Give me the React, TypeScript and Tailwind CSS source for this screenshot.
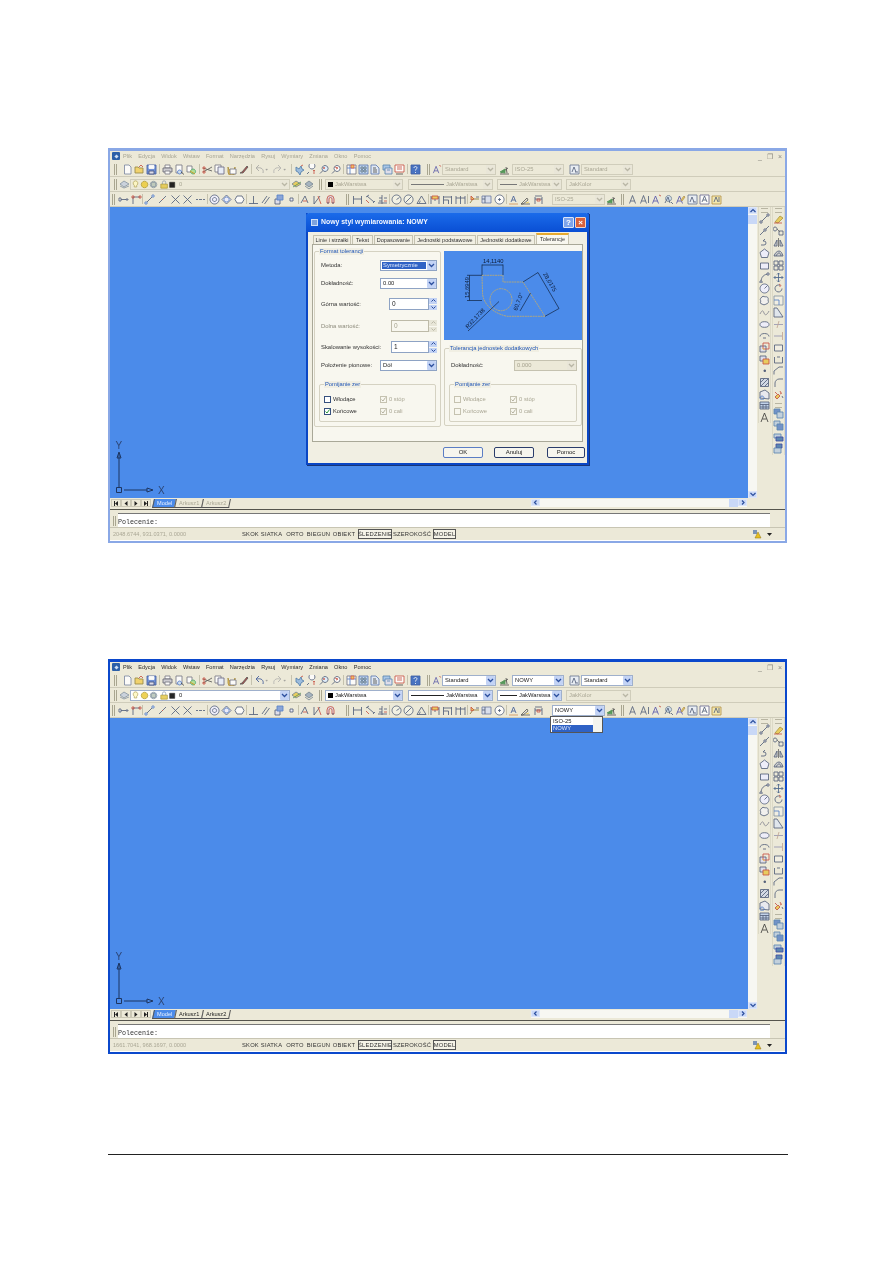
import React from 'react'

// small drawing helpers
const N = '#3b4a6b'
const R = '#c0392b'
const Y = '#e8c84a'
const B = '#3f6fc4'
type P = [string, string, string?]

const ICONS: Record<string, P[]> = {
  // standard toolbar
  new: [['M2.500 1h4.500l2 2v7h-6.500z', '#6b7a99', '#fff']],
  open: [['M1 3h3l1 1h4v5H1z', '#8a7a30', '#f2cf5b'], ['M5 3l2-2 2 2', R]],
  save: [['M1 1h9v9H1z', '#2b4a9a', '#5b82d6'], ['M3 1.500h5v3H3z', '#fff', '#fff'], ['M3 7h5v3H3z', '#2b3a6a', '#dde']],
  print: [['M3 1h5v3H3z', '#667', '#fff'], ['M1 4h9v4H1z', '#556', '#c8c8d0'], ['M3 7h5v3H3z', '#667', '#fff']],
  preview: [['M2 1h6v8H2z', '#667', '#fff'], ['M5.500 6a2 2 0 1 0 .1 0z', '#36c', '#cde'], ['M7 8l3 2.500', '#333']],
  publish: [['M1 2h5v6H1z', '#667', '#fff'], ['M7 5a2.500 2.500 0 1 0 .1 0z', '#396', '#ad8'], ['M4 7l5 3', '#c80']],
  cut: [['M1 4l9 3M1 8l9-5', '#444'], ['M1 3h2v2H1zM1 7h2v2H1z', R]],
  copy: [['M1 1h6v7H1z', '#667', '#fff'], ['M4 3h6v7H4z', '#557', '#e8eefc']],
  paste: [['M2 3a3.500 3.500 0 1 0 7 0v5a3 3 0 0 1-7 0z', '#a08020', '#e5b848'], ['M4 5h6v5H4z', '#667', '#fff']],
  brush: [['M2 9l2-1 5-6 1 1-5 6z', '#444', '#a33']],
  undo: [['M9 9c1-4-2-6-6-5M5 1L2 4l3 3', '#999']],
  undoOn: [['M9 9c1-4-2-6-6-5M5 1L2 4l3 3', '#1d3f8c']],
  redo: [['M2 9c-1-4 2-6 6-5M6 1l3 3-3 3', '#a8a8a8']],
  caret: [['M1.500 5h3l-1.500 2z', '#888', '#888']],
  pan: [['M2 3l3 2 2-3 1 3 2 1-3 2-1 3-2-3-2-1z', '#3a6ea5', '#8fb5df'], ['M7 2l2-1', R]],
  zoomrt: [['M6 5a3 3 0 1 0-.1 0z', N, '#fff'], ['M3 8L1 10', N], ['M8 7v3M7 7l1-1 1 1', R]],
  zoom: [['M7 1.500a3 3 0 1 0 .1 0z', N, '#def'], ['M5 6.500l-3 3', N], ['M6 3v2M5 4h2', R]],
  zoomprev: [['M7 1.500a3 3 0 1 0 .1 0z', N, '#fff'], ['M5 6.500l-3 3', N], ['M5 3l3 1-2 1', R]],
  props: [['M1 1h9v9H1z', '#667', '#fff'], ['M1 4h9M4 1v9', B], ['M5 1h3v3H5z', '#d43', Y]],
  dc: [['M1 1h9v9H1z', '#46a', '#bcd3f3'], ['M3 3h2v2H3zM6 3h2v2H6zM3 6h2v2H3zM6 6h2v2H6z', '#357', '#fff']],
  palette: [['M1 1h5l3 3v6H1z', '#46a', '#dfe8f8'], ['M3 4h3M3 6h4M3 8h4', '#333']],
  sheet: [['M1 1h7v5H1z', '#47a', '#9dc0ea'], ['M3 4h7v6H3z', '#47a', '#dde'], ['M5 6h3', '#47a']],
  markup: [['M1 1h9v7H1z', R, '#fff'], ['M3 3h5M3 5h5', R], ['M2 10h7', '#333']],
  help: [['M1 1h9v9H1z', '#234a9a', '#2d5fbe'], ['M4 4c0-2 3-2 3 0 0 1-1.500 1-1.500 2.500M5.500 8v1', '#fff']],
  // layers
  layers: [['M1 5l4-3 5 3-5 3z', '#789', '#c5cfdd'], ['M1 7l4 2 5-2', '#789']],
  bulb: [['M5.500 1a3 3 0 0 0-1.500 5.500v2h3v-2A3 3 0 0 0 5.500 1z', '#a09040', '#fff8c0']],
  sun: [['M5.500 1.500a4 4 0 1 0 .1 0z', '#a08a18', '#eccb3a']],
  cube: [['M5.500 1.500a4 4 0 1 0 .1 0z', '#789', '#b6c4b6'], ['M3 3h5v5H3z', '#789']],
  lock: [['M1 5h8v5H1z', '#a08a18', '#e4c84a'], ['M3 5V3a2 2 0 0 1 4 0v2', '#789']],
  swatch: [['M1 2h8v8H1z', '#000', '#000']],
  layprev: [['M1 5l4-3 5 3-5 3z', '#678', Y], ['M2 8l8-5', '#484']],
  layiso: [['M2 5l4-3 4 3-4 3z', '#678', '#9ab'], ['M2 7l4 3 4-3', '#678']],
  // object snap row
  dist: [['M1 5.500h9', N], ['M1 4h2v3H1zM8 5h2v1H8z', N, '#fff']],
  ray: [['M2 10V3h7', N], ['M1 2h2v2H1zM8 2h2v2H8z', R]],
  seg: [['M2 9l7-7', N], ['M1 8h2v2H1zM8 1h2v2H8z', B, '#fff']],
  seg2: [['M2 9l7-7', N], ['M5 5l1 1', R]],
  cross: [['M1.500 1.500l8 8M9.500 1.500l-8 8', N]],
  dash: [['M1 5.500h2M4 5.500h3M8 5.500h2', N]],
  target: [['M5.500 1a4.500 4.500 0 1 0 .1 0z', N, '#eef'], ['M5.500 3.500a2 2 0 1 0 .1 0z', N]],
  diamond: [['M5.500 1l4.500 4.500-4.500 4.500-4.500-4.500z', N, '#eef'], ['M5.500 3a2.500 2.500 0 1 0 .1 0z', B]],
  hexa: [['M3 2h5l2 3.500-2 3.500H3L1 5.500z', N, '#fff']],
  perp: [['M1 9.500h9M5.500 9.500V2', N]],
  para: [['M2 9l5-7M4.500 10l5-7', N]],
  insert: [['M2 5h5v5H2z', N, '#dde'], ['M4 1h6v5H4z', B, '#7a9ad8']],
  node: [['M4 4h3v3H4z', N, '#eef']],
  none: [['M2 9l4-7 3 7', N], ['M4 7h4', R]],
  osnap1: [['M2 10V2M2 10l6-8', N], ['M6 2l3 8', R, R]],
  magnet: [['M2 9V5a3.500 3.500 0 0 1 7 0v4H7V5a1.500 1.500 0 0 0-3 0v4z', R, '#d9d9ea'], ['M2 9h2M7 9h2', N]],
  // dimension row
  dimlin: [['M1.500 2v8M9.500 2v8M1.500 5h8', N]],
  dimali: [['M2 3l3-2M9 9l2-2M3 2l7 6', N], ['M2 6l3 3', R]],
  dimord: [['M5 1v9M1 9h9M2 4h3M2 7h3M7 4h3', N], ['M7 7h3', R]],
  dimrad: [['M5.500 1a4.500 4.500 0 1 0 .1 0z', N, '#f4f3e6'], ['M5.500 5.500l3-2', N]],
  dimdia: [['M5.500 1a4.500 4.500 0 1 0 .1 0z', N, '#f4f3e6'], ['M2.500 8.500l6-6', N]],
  dimang: [['M1 9.500h9L5.500 2z', N], ['M3.500 9c0-1 .5-2 1-2', N]],
  dimqk: [['M1 2v8M5 2v5M9 2v8M1 4h8', N], ['M2 2h6v3H2z', R, Y]],
  dimbase: [['M1.500 2v8M9.500 2v8M1.500 3h8M1.500 6h5M6.500 6v4', N]],
  dimcont: [['M1 2v8M5.500 2v8M10 2v8M1 4h9', N]],
  leader: [['M1 9l3-4h6', '#7a6a20'], ['M2 2l3 3-3 1z', R, Y], ['M7 3h3', N]],
  tol: [['M1 2h9v7H1z', '#5a6a9a', '#d6def0'], ['M4 2v7M1 5h3', N]],
  center: [['M5.500 1a4.500 4.500 0 1 0 .1 0z', N, '#fff'], ['M4 5.500h3M5.500 4v3', N]],
  dimed: [['M3 8l2.500-6L8 8M4 6h3', '#2c4a8c'], ['M1 10h9', '#c84']],
  dimtxt: [['M1 10l6-6 1 2-5 4zM1 10h9', '#444'], ['M6 9l3-1', Y]],
  dimup: [['M2 3v7M9 3v7M2 5h7M2 2h7', N], ['M4 5h3v2H4z', R]],
  dimstyle: [['M1 10h9M2 9l7-5', '#333'], ['M7 3l1 6', '#333'], ['M1 8l5-3v4z', '#3c8a45', '#3c8a45']],
  // text
  A: [['M2.500 9.500L5.500 1.500l3 8M3.500 7h4', N]],
  AI: [['M1.500 9.500L4.500 1.500l3 8M2.500 7h4M9.500 2v7', N]],
  Ac: [['M1.500 9.500L4.500 2l3 7.500M2.500 7h4', '#4040a0'], ['M8 1l2 1', R]],
  Afind: [['M5.500 1.500a3 3 0 1 0 .1 0z', '#678', '#cde'], ['M8 8l2 2M2 9l3-6 2 6', N]],
  Apen: [['M1.500 9.500L4.500 2l3 7.500M2.500 7h4', '#4040a0'], ['M6 6l3-4 1 1-3 4z', '#a84', Y]],
  Asc: [['M1 1h9v9H1z', '#568', '#e8eef8'], ['M3 8l2-5 2 5M6 8h3', N]],
  Abox: [['M1 1h9v9H1z', '#558', '#fff'], ['M3 8l2.500-6L8 8M4 6h3', N]],
  Agrp: [['M1 2h9v8H1z', '#a83', '#f4e7a8'], ['M3 8l2-5 2 5M8 3v5', N]],
  // draw toolbar
  line: [['M2 9l7-7', N], ['M1 8h2v2H1zM8 1h2v2H8z', N, '#fff']],
  xline: [['M1 10l9-9', N], ['M5 4h2v2H5z', N, '#fff']],
  pline: [['M2 8h3a2 2 0 0 0 0-4H4l2-2', N]],
  polygon: [['M5.500 1l4.500 3.500-1.500 5h-6l-1.500-5z', N, '#eef']],
  rect: [['M1.500 3h8v6h-8z', N, '#eef']],
  arc: [['M2 10C2 5 5 2 10 2', N], ['M1 9h2v2H1zM8 1h2v2H8z', N, '#fff']],
  circle: [['M5.500 1a4.500 4.500 0 1 0 .1 0z', N, '#eef'], ['M5.500 5.500l3-3', N]],
  cloud: [['M2 3c1-2 3-2 4-1 2-1 4 1 3 3 1 2 0 4-2 4-1 1-3 1-4 0-2 0-2-2-1-3-1-1-1-2 0-3z', N, '#f2f2f2']],
  spline: [['M1 7c2-4 3-4 4-1s3 2 5-2', '#778']],
  ellipse: [['M1 5.500a4.500 2.800 0 1 0 9 0 4.500 2.800 0 1 0-9 0z', N, '#eef']],
  earc: [['M1 6.500c0-4 9-4 9 0', N], ['M4 8h3', N]],
  ins: [['M1 4h6v6H1z', N, '#dde'], ['M4 1h6v6H4z', R], ['M3 6l3 2', Y]],
  block: [['M1 2h6v5H1z', N, '#dde'], ['M4 5h6v5H4z', R, Y]],
  point: [['M5 5h1.500v1.500H5z', N, N]],
  hatch: [['M1.500 1.500h8v8h-8z', N, '#cfd8e8'], ['M1.500 9.500l8-8M1.500 5.500l4-4M5.500 9.500l4-4', N]],
  region: [['M1 9V3l5-2 4 3v6z', N, '#e8eaf2'], ['M3 7a2 2 0 1 0 .1 0z', B]],
  table: [['M1 2h9v7H1z', N, '#bcd0ee'], ['M1 4.500h9M1 7h9M4 4.500V9M7 4.500V9', N]],
  mtext: [['M2 10L5.500 1 9 10M3.500 7h4', '#222']],
  // modify toolbar
  erase: [['M2 9l5-6 3 2-5 5z', '#a08a28', Y], ['M1 10h8', R]],
  copyo: [['M2 2a2 2 0 1 0 .1 0zM6 6h4v4H6z', N], ['M4 4l3 3', '#555']],
  mirror: [['M5.500 1v9', '#555'], ['M4 3v6H1zM7 3v6h3z', N, '#ccc']],
  offset: [['M1 8c1-3 3-5 5-5s3 2 4 5z', N, '#cfcfcf'], ['M3 8c1-2 2-3 3-3s2 1 2 3', N]],
  array: [['M1 1h4v4H1zM6 1h4v4H6zM1 6h4v4H1zM6 6h4v4H6z', N]],
  move: [['M5.500 1v9M1 5.500h9M4 2.500l1.500-1.500L7 2.500M4 8.500L5.500 10 7 8.500M2.500 4L1 5.500 2.500 7M8.500 4L10 5.500 8.500 7', '#2f4f80']],
  rotate: [['M9 5.500a3.500 3.500 0 1 1-2-3.200', N], ['M6 1l2 1.500L6.500 4', R]],
  scale: [['M1 1h9v9H1z', '#789', '#f2f0e4'], ['M1 5h5v5', B]],
  stretch: [['M1 1h3l6 9H1z', N, '#dfe6f0']],
  trim: [['M1 5.500h9', '#88a'], ['M6 2L4 9', '#b98']],
  extend: [['M1 6h8', '#88a'], ['M9.500 2v8', '#b98']],
  brk: [['M1.500 3h8v6h-8z', N, '#f2f0e4']],
  brk2: [['M1.500 3v6h8V3M4 3h3', N]],
  chamfer: [['M1 9.500V6l5-4h4', N]],
  fillet: [['M2 10V6c0-2 2-4 4-4h4', N]],
  explode: [['M2 8l3-3 2 2-3 3z', R, Y], ['M7 2l1 2M9 4l-2 1M2 3l2 2', R], ['M9 7l1 2', N]],
  ord1: [['M1 1h6v5H1z', '#47a', '#5d83c5'], ['M4 4h6v6H4z', '#47a', '#bcd']],
  ord2: [['M1 1h6v5H1z', '#47a', '#bcd'], ['M4 4h6v6H4z', '#47a', '#5d83c5']],
  ord3: [['M1 2h7v4H1z', '#47a', '#bcd'], ['M3 5h7v4H3z', '#239', '#47a']],
  ord4: [['M3 1h6v4H3z', '#239', '#47a'], ['M1 5h7v5H1z', '#47a', '#bcd']],
}

const Icon = ({ name, size = 11 }: { name: string; size?: number }) => (
  <svg className="opacity-85" width={size} height={size} viewBox="0 0 11 11" fill="none" strokeWidth=".85">
    {ICONS[name].map(([d, stroke, fill], i) => (
      <path key={i} d={d} stroke={stroke} fill={fill ?? 'none'} />
    ))}
  </svg>
)

const Tool = ({ name, wide, cls = 'w-[12px]' }: { name: string; wide?: boolean; cls?: string }) =>
  name === 'caret' ? (
    <div className="w-[6px] flex justify-center overflow-hidden"><Icon name="caret" /></div>
  ) : (
    <div className={`h-[12px] shrink-0 flex items-center justify-center ${wide ? 'w-[12.700px]' : cls}`}><Icon name={name} /></div>
  )

const Sep = ({ thin }: { thin?: boolean }) => <div className={`w-[1px] h-[10px] bg-[#c5c2ae] ${thin ? '' : 'mx-[1.500px]'}`} />
const Grip = () => <div className="w-[3px] h-[11px] mx-[2px] border-x border-[#a9a690]" />

const Chevron = ({ on }: { on: boolean }) => (
  <div className={`w-[9px] self-stretch flex items-center justify-center rounded-[1px] ${on ? 'bg-[#c3d3f5]' : 'bg-[#e9e6d8]'}`}>
    <svg width="7" height="5" viewBox="0 0 7 5" fill="none">
      <path d="M1 1l2.500 2.500L6 1" stroke={on ? '#2c4f9e' : '#b9b6a6'} strokeWidth="1.300" />
    </svg>
  </div>
)

// combobox in the toolbars
const Combo = ({ label, on, cls, swatch, rule }: { label: string; on: boolean; cls: string; swatch?: boolean; rule?: string }) => (
  <div className={`h-[11px] shrink-0 flex items-center border ${on ? 'bg-white border-[#9fb0cc]' : 'bg-[#ece9d8] border-[#d0cdbb]'} ${cls}`}>
    <div className={`flex-1 flex items-center min-w-0 pl-[2px] gap-[2px] text-[5.800px] whitespace-nowrap ${on ? 'text-[#222]' : 'text-[#aaa795]'}`}>
      {swatch && <div className="w-[5px] h-[5px] shrink-0 bg-black" />}
      {rule && <div className={`h-[1px] shrink-0 ${rule} ${on ? 'bg-[#222]' : 'bg-[#777]'}`} />}
      {label}
    </div>
    <Chevron on={on} />
  </div>
)

const ToolRow = ({ children }: { children: React.ReactNode }) => (
  <div className="h-[15px] flex items-center border-b border-[#cfccba] bg-[#ece9d8]">{children}</div>
)

const Tools = ({ names, wide, thin }: { names: string[]; wide?: boolean; thin?: boolean }) => (
  <>
    {names.map((n, i) => (n === '|' ? <Sep key={i} thin={thin} /> : <Tool key={i} name={n} wide={wide} />))}
  </>
)

const Toolbars = ({ on }: { on: boolean }) => (
  <div className="flex flex-col">
    <ToolRow>
      <div className="w-[2px]" />
      <Grip />
      <div className="w-[2px]" />
      <Tools names={['new', 'open', 'save', '|', 'print', 'preview', 'publish', '|', 'cut', 'copy', 'paste', 'brush', '|', on ? 'undoOn' : 'undo', 'caret', 'redo', 'caret', '|', 'pan', 'zoomrt', 'zoom', 'zoomprev', '|', 'props', 'dc', 'palette', 'sheet', 'markup', '|', 'help']} />
      <div className="w-[4px]" />
      <Grip />
      <Tool name="Ac" cls="w-[10px]" />
      <Combo label="Standard" on={on} cls="w-[54px]" />
      <Tool name="dimstyle" cls="w-[12px] mx-[2px]" />
      <Combo label={on ? 'NOWY' : 'ISO-25'} on={on} cls="w-[52px]" />
      <div className="w-[4px]" />
      <Tool name="Asc" />
      <Combo label="Standard" on={on} cls="w-[52px] ml-[1px]" />
    </ToolRow>
    <ToolRow>
      <div className="w-[2px]" />
      <Grip />
      <Tool name="layers" cls="w-[11px]" />
      <div className="flex items-center shrink-0 w-[160px] h-[11px] border border-[#d0cdbb] data-[on=true]:bg-white data-[on=true]:border-[#9fb0cc]" data-on={on}>
        <div className="flex-1 flex items-center">
          <Icon name="bulb" size={9} />
          <Icon name="sun" size={9} />
          <Icon name="cube" size={9} />
          <div className="w-[2px]" />
          <Icon name="lock" size={9} />
          <Icon name="swatch" size={7} />
          <span className={`ml-[3px] text-[5.800px] ${on ? 'text-[#222]' : 'text-[#aaa795]'}`}>0</span>
        </div>
        <Chevron on={on} />
      </div>
      <Tool name="layprev" />
      <Tool name="layiso" />
      <div className="w-[3px]" />
      <Grip />
      <Combo label="JakWarstwa" on={on} cls="w-[78px] ml-[1px]" swatch />
      <Combo label="JakWarstwa" on={on} cls="w-[85px] ml-[5px]" rule="w-[33px]" />
      <Combo label="JakWarstwa" on={on} cls="w-[65px] ml-[4px]" rule="w-[17px]" />
      <Combo label="JakKolor" on={false} cls="w-[65px] ml-[4px]" />
    </ToolRow>
    <ToolRow>
      <Grip />
      <Tools wide thin names={['dist', 'ray', '|', 'seg', 'seg2', 'cross', 'cross', 'dash', '|', 'target', 'diamond', 'hexa', '|', 'perp', 'para', 'insert', 'node', '|', 'none', 'osnap1', 'magnet']} />
      <div className="w-[7px]" />
      <Grip />
      <Tools wide thin names={['dimlin', 'dimali', 'dimord', '|', 'dimrad', 'dimdia', 'dimang', '|', 'dimqk', 'dimbase', 'dimcont', '|', 'leader', 'tol', 'center', '|', 'dimed', 'dimtxt', 'dimup']} />
      <Combo label={on ? 'NOWY' : 'ISO-25'} on={on} cls="w-[53px] ml-[7px]" />
      <Tool name="dimstyle" />
      <div className="w-[2px]" />
      <Grip />
      <Tools names={['A', 'AI', 'Ac', 'Afind', 'Apen', 'Asc', 'Abox', 'Agrp']} />
    </ToolRow>
  </div>
)

const MENU = ['Plik', 'Edycja', 'Widok', 'Wstaw', 'Format', 'Narzędzia', 'Rysuj', 'Wymiary', 'Zmiana', 'Okno', 'Pomoc']

const MenuBar = ({ on }: { on: boolean }) => (
  <div className={`h-[11px] pb-[1px] flex items-center bg-[#ece9d8] text-[5.600px] ${on ? 'text-[#2a2a2a]' : 'text-[#a7a594]'}`}>
    <div className="w-[8px] h-[8px] ml-[2px] rounded-[1px] bg-[#2b5fa8] flex items-center justify-center">
      <div className="w-[3px] h-[3px] rotate-45 bg-[#cfe0f5]" />
    </div>
    <div className="flex gap-[6.200px] ml-[3px]">
      {MENU.map((m) => <span key={m}>{m}</span>)}
    </div>
    <div className="ml-auto mr-[3px] flex gap-[5px] text-[7px] text-[#8b8a80] leading-none">
      <span>_</span><span>&#x2750;</span><span>×</span>
    </div>
  </div>
)

const ScrollBtn = ({ d }: { d: string }) => (
  <div className="w-[9px] h-[7px] shrink-0 bg-[#c9d8f7] border border-[#dde6fa] flex items-center justify-center">
    <svg width="6" height="5" viewBox="0 0 6 5" fill="none"><path d={d} stroke="#2c4f9e" strokeWidth="1.200" /></svg>
  </div>
)

const VScroll = () => (
  <div className="w-[9px] flex flex-col bg-[#f7f7f2]">
    <ScrollBtn d="M.500 4L3 1.500 5.500 4" />
    <div className="h-[9px] mt-[1px] bg-[#c9d8f7]" />
    <div className="flex-1" />
    <ScrollBtn d="M.500 1L3 3.500 5.500 1" />
  </div>
)

const SideTools = () => {
  const draw = ['line', 'xline', 'pline', 'polygon', 'rect', 'arc', 'circle', 'cloud', 'spline', 'ellipse', 'earc', 'ins', 'block', 'point', 'hatch', 'region', 'table', 'mtext']
  const modify = ['erase', 'copyo', 'mirror', 'offset', 'array', 'move', 'rotate', 'scale', 'stretch', 'trim', 'extend', 'brk', 'brk2', 'chamfer', 'fillet', 'explode']
  const order = ['ord1', 'ord2', 'ord3', 'ord4']
  const Cell = ({ n }: { n: string }) => <div className="h-[11.700px] flex items-center justify-center"><Icon name={n} /></div>
  const Head = () => <div className="h-[5px] mx-[2px] border-y border-[#b8b5a2]" />
  return (
    <div className="w-[28px] flex items-start pl-[1px] gap-[1px] bg-[#ece9d8]">
      <div className="w-[13px] pt-[1px] border-x border-[#dcd9c6]">
        <Head />
        {draw.map((n) => <Cell key={n} n={n} />)}
      </div>
      <div className="w-[13px] pt-[1px] border-x border-[#dcd9c6]">
        <Head />
        {modify.map((n) => <Cell key={n} n={n} />)}
        <div className="h-[3px]" />
        <Head />
        {order.map((n) => <Cell key={n} n={n} />)}
      </div>
    </div>
  )
}

const Ucs = () => (
  <svg className="absolute left-[3px] bottom-[3px]" width="60" height="60" viewBox="0 -10 60 60" fill="none">
    <path d="M6 42V8M11 45H34" stroke="#1d3560" strokeWidth="1" />
    <path d="M3.500 42.500h5v5h-5z" stroke="#1d3560" />
    <path d="M6 7l-2 6h4z" stroke="#1d3560" />
    <path d="M34 43l6 2-6 2z" stroke="#1d3560" />
    <text x="2.500" y="4" className="text-[10px]" fill="#2c4676" style={{ fontFamily: 'Liberation Sans' }}>Y</text>
    <text x="45" y="49" className="text-[10px]" fill="#2c4676" style={{ fontFamily: 'Liberation Sans' }}>X</text>
  </svg>
)

const Tab = ({ label, active, on }: { label: string; active?: boolean; on: boolean }) => (
  <div className={`h-[9px] -ml-[1px] px-[3px] -skew-x-12 flex items-center border-x border-b border-[#555] text-[5.600px] ${active ? 'bg-[#4b8bea]' : 'bg-[#ece9d8]'}`}>
    <span className={`skew-x-12 ${active ? 'text-[#e8f0ff]' : on ? 'text-[#222]' : 'text-[#aaa795]'}`}>{label}</span>
  </div>
)

const NavBtn = ({ d }: { d: string }) => (
  <div className="w-[10px] h-[8px] flex items-center justify-center border border-[#cbc8b6]">
    <svg width="6" height="5" viewBox="0 0 6 5"><path d={d} fill="#222" /></svg>
  </div>
)

const TabRow = ({ on }: { on: boolean }) => (
  <div className="h-[10px] flex items-center bg-[#ece9d8]">
    <div className="flex ml-[1px] mr-[3px]">
      <NavBtn d="M1 0h1v5H1zM5 0v5L2 2.500z" />
      <NavBtn d="M4.500 0v5L1.500 2.500z" />
      <NavBtn d="M1.500 0v5l3-2.500z" />
      <NavBtn d="M4 0h1v5H4zM1 0v5l3-2.500z" />
    </div>
    <Tab label="Model" active on={on} />
    <Tab label="Arkusz1" on={on} />
    <Tab label="Arkusz2" on={on} />
    <div className="ml-auto w-[216px] h-[8px] flex bg-[#f7f7f2] justify-between">
      <ScrollBtn d="M3.500 .500L1.500 2.500 3.500 4.500" />
      <div className="flex">
        <div className="w-[9px] bg-[#c9d8f7]" />
        <ScrollBtn d="M2 .500L4 2.500 2 4.500" />
      </div>
    </div>
  </div>
)

const STATUS = [
  { t: 'SKOK', c: 'w-[17px]' },
  { t: 'SIATKA', c: 'w-[21px] ml-[2px]' },
  { t: 'ORTO', c: 'w-[16px] ml-[5px]' },
  { t: 'BIEGUN', c: 'w-[23px] ml-[4px]' },
  { t: 'OBIEKT', c: 'w-[22px] ml-[3px]' },
  { t: 'ŚLEDZENIE', c: 'w-[34px] ml-[3px] border border-[#555] bg-[#f5f3e8]' },
  { t: 'SZEROKOŚĆ', c: 'w-[36px] ml-[2px]' },
  { t: 'MODEL', c: 'w-[23px] ml-[3px] border border-[#555] bg-[#f5f3e8]' },
]

const StatusBar = ({ coords }: { coords: string }) => (
  <div className="h-[13px] flex items-center bg-[#ece9d8] border-t border-[#c8c5b3]">
    <div className="w-[132px] pl-[3px] text-[5.600px] text-[#aaa795] whitespace-nowrap">{coords}</div>
    {STATUS.map((s) => (
      <div key={s.t} className={`h-[10px] flex items-center justify-center text-[5.800px] tracking-[0.2px] text-[#333] whitespace-nowrap ${s.c}`}>{s.t}</div>
    ))}
    <div className="ml-auto mr-[4px] flex items-center gap-[4px]">
      <svg width="11" height="10" viewBox="0 0 11 10"><path d="M1 1h4v4H1z" fill="#7a93b8" /><path d="M3 9l3-6 3 6z" fill="#e8c020" stroke="#8a7010" strokeWidth=".5" /></svg>
      <svg width="5" height="3" viewBox="0 0 5 3"><path d="M0 0h5L2.500 3z" fill="#222" /></svg>
      <div className="w-[5px]" />
    </div>
  </div>
)

// the acad window, shown twice
const AcadWindow = ({ on, coords, children }: { on: boolean; coords: string; children?: React.ReactNode }) => (
  <div className={`w-[679px] h-[395px] flex flex-col border-x-2 border-b-2 border-t-[3px] font-['Liberation_Sans',sans-serif] ${on ? 'border-[#0b48cc]' : 'border-[#8aa8e6]'}`}>
    <MenuBar on={on} />
    <Toolbars on={on} />
    <div className="h-[291px] flex">
      <div className="relative flex-1 bg-[#4b8bea]">
        <Ucs />
        {children}
      </div>
      <VScroll />
      <SideTools />
    </div>
    <div className="pr-[38px] bg-[#ece9d8]"><TabRow on={on} /></div>
    <div className="h-[19px] flex flex-col bg-[#ece9d8]">
      <div className="h-[2px] mt-[1px] border-t border-[#55544c]" />
      <div className="flex-1 flex items-end pl-[3px] pr-[15px] pt-[2px]">
        <div className="w-[3px] h-[10px] border-x border-[#a9a690] mr-[2px] mb-[1px]" />
        <div className="flex-1 h-[14px] bg-white border-t border-[#777] flex items-end">
          <span className="font-['Liberation_Mono',monospace] text-[6.700px] text-[#333] leading-[9px]">Polecenie:</span>
        </div>
      </div>
    </div>
    <StatusBar coords={coords} />
  </div>
)

/* ---- dialog ---- */

const DLG_TABS = [
  { t: 'Linie i strzałki', c: 'w-[38px]' },
  { t: 'Tekst', c: 'w-[21px]' },
  { t: 'Dopasowanie', c: 'w-[39px]' },
  { t: 'Jednostki podstawowe', c: 'w-[62px]' },
  { t: 'Jednostki dodatkowe', c: 'w-[58px]' },
]

const Group = ({ title, cls, children }: { title: string; cls: string; children: React.ReactNode }) => (
  <div className={`relative border border-[#d5d2c2] rounded-[2px] ${cls}`}>
    <span className="absolute -top-[4px] left-[4px] px-[1px] bg-[#f1efe3] text-[5.800px] leading-[7px] text-[#1f55b5] whitespace-nowrap">{title}</span>
    {children}
  </div>
)

const Check = ({ label, checked, off }: { label: string; checked?: boolean; off?: boolean }) => (
  <div className={`h-[8px] flex items-center gap-[2px] text-[5.800px] ${off ? 'text-[#aaa795]' : 'text-[#333]'}`}>
    <div className={`w-[7px] h-[7px] flex items-center justify-center border ${off ? 'border-[#c5c2b0]' : 'border-[#36507e] bg-white'}`}>
      {checked && (
        <svg width="5" height="5" viewBox="0 0 5 5" fill="none"><path d="M.500 2.500l1.500 1.500 2.500-3.500" stroke={off ? '#b5b2a0' : '#2a9a3a'} /></svg>
      )}
    </div>
    {label}
  </div>
)

const Zeros = ({ off, cls }: { off?: boolean; cls: string }) => (
  <Group title="Pomijanie zer" cls={cls}>
    <div className="grid grid-cols-[56px_1fr] gap-y-[4px] pt-[10px] pl-[4px]">
      <Check label="Włodące" off={off} />
      <Check label="0 stóp" checked off />
      <Check label="Końcowe" checked={!off} off={off} />
      <Check label="0 cali" checked off />
    </div>
  </Group>
)

const DlgCombo = ({ label, sel, cls }: { label: string; sel?: boolean; cls: string }) => (
  <div className={`h-[11px] flex items-center border border-[#8ea3c4] bg-white text-[5.800px] ${cls}`}>
    <span className={`flex-1 pl-[1px] ${sel ? 'bg-[#2f62c5] text-[#dfe8fa] mx-[1px] h-[7px] flex items-center' : 'pl-[2px] text-[#222]'}`}>{label}</span>
    <Chevron on />
  </div>
)

const Spin = ({ value, off, cls }: { value: string; off?: boolean; cls: string }) => (
  <div className={`h-[12px] flex items-center ${cls}`}>
    <div className={`flex-1 h-full border text-[6.500px] pl-[2px] flex items-center ${off ? 'border-[#bdbaa8] text-[#a5a28f]' : 'border-[#8ea3c4] bg-white text-[#222]'}`}>{value}</div>
    <div className="w-[8px] h-full flex flex-col gap-[1px] ml-[0.500px]">
      <div className={`flex-1 flex items-center justify-center ${off ? 'bg-[#e8e6d8]' : 'bg-[#c3d3f5]'}`}>
        <svg width="5" height="3" viewBox="0 0 5 3" fill="none"><path d="M.500 2.500l2-2 2 2" stroke={off ? '#bbb8a8' : '#2c4f9e'} /></svg>
      </div>
      <div className={`flex-1 flex items-center justify-center ${off ? 'bg-[#e8e6d8]' : 'bg-[#c3d3f5]'}`}>
        <svg width="5" height="3" viewBox="0 0 5 3" fill="none"><path d="M.500 .500l2 2 2-2" stroke={off ? '#bbb8a8' : '#2c4f9e'} /></svg>
      </div>
    </div>
  </div>
)

const Row = ({ label, cls, off, children }: { label: string; cls: string; off?: boolean; children: React.ReactNode }) => (
  <div className={`flex items-center justify-between pl-[6px] pr-[3px] ${cls}`}>
    <span className={`text-[5.900px] whitespace-nowrap ${off ? 'text-[#8d8b7c]' : 'text-[#333]'}`}>{label}</span>
    {children}
  </div>
)

const DimPreview = () => (
  <div className="h-[89px] bg-[#4b8bea]">
    <svg width="136" height="89" viewBox="0 0 136 89" fill="none">
      <g stroke="#b5a878" strokeDasharray="2 .6" strokeWidth=".9">
        <path d="M38 24.300H59V31H79L101 65.300H63C48 62 38 52 38.500 40z" />
        <circle cx="57" cy="48.700" r="11" />
      </g>
      <g stroke="#10223f" strokeWidth=".7">
        <path d="M38 24V13.500M59 24V13.500M38 14H59" />
        <path d="M38 24.300H23M38 49.500H23M25.500 24.300V49.500" />
        <path d="M79 31L94 21.500M101 65.300L115 57.500M94 21.500L115 57.500" />
        <path d="M76 60L86.500 42" />
        <path d="M55 50.500L24 80" />
      </g>
      <g fill="#0d1c36" style={{ fontFamily: 'Liberation Sans' }} className="text-[5.800px]">
        <text x="39" y="12">14,1140</text>
        <text transform="translate(24.500 47) rotate(-90)">15,6949</text>
        <text transform="translate(99 23) rotate(60)">28,0175</text>
        <text transform="translate(73 60) rotate(-70)">60,7,0°</text>
        <text transform="translate(24 78) rotate(-47)">R32,1738</text>
      </g>
    </svg>
  </div>
)

const DlgBtn = ({ label, cls }: { label: string; cls: string }) => (
  <div className={`h-[11px] flex items-center justify-center rounded-[2px] border border-[#2a3c6b] bg-[#f6f5ee] text-[6px] text-[#222] ${cls}`}>{label}</div>
)

const Dialog = () => (
  <div className="absolute left-[196px] top-[6px] w-[283px] h-[252px] flex flex-col border-[2px] border-t-0 border-[#0a46c4] bg-[#f1efe3] shadow-[1px_1px_0_#17357a]">
    <div className="h-[19px] -mx-[2px] shrink-0 flex items-center pl-[5px] pr-[3px] rounded-t-[3px] bg-linear-to-b from-[#1b6bea] to-[#0a4fd4]">
      <div className="w-[7px] h-[7px] border border-[#cfe0f8] bg-[#7fa3de]" />
      <span className="ml-[3px] text-[6.900px] font-bold text-[#f2f6ff] whitespace-nowrap">Nowy styl wymiarowania: NOWY</span>
      <div className="ml-auto w-[11px] h-[11px] rounded-[1px] bg-[#7ea4ea] border border-[#dbe6fa] flex items-center justify-center text-[8px] font-bold text-white">?</div>
      <div className="ml-[1px] w-[11px] h-[11px] rounded-[1px] bg-[#d8613c] border border-[#f3d6c8] flex items-center justify-center text-[8px] font-bold text-white">×</div>
    </div>
    <div className="h-[12px] shrink-0 flex items-end pl-[5px] pt-[3px] text-[5.500px] text-[#333]">
      {DLG_TABS.map((t) => (
        <div key={t.t} className={`h-[9px] flex items-center justify-center mr-[1px] border-x border-t border-[#c5c2b0] rounded-t-[1px] whitespace-nowrap ${t.c}`}>{t.t}</div>
      ))}
      <div className="w-[33px] h-[11px] flex items-center justify-center bg-[#f8f7ef] border-x border-[#c5c2b0] border-t-2 border-t-[#e6a92f] whitespace-nowrap">Tolerancje</div>
    </div>
    <div className="mx-[4px] h-[198px] flex gap-[3px] pl-[1px] pt-[6px] border border-[#a9a898] bg-[#f8f7ef]">
      <Group title="Format tolerancji" cls="w-[128px] h-[176px] pt-[8px]">
        <Row label="Metoda:" cls="h-[11px]"><DlgCombo label="Symetrycznie" sel cls="w-[57px]" /></Row>
        <Row label="Dokładność:" cls="h-[11px] mt-[7px]"><DlgCombo label="0.00" cls="w-[57px]" /></Row>
        <Row label="Górna wartość:" cls="h-[12px] mt-[9px]"><Spin value="0" cls="w-[48px]" /></Row>
        <Row label="Dolna wartość:" off cls="h-[12px] mt-[10px]"><Spin value="0" off cls="w-[46px]" /></Row>
        <Row label="Skalowanie wysokości:" cls="h-[12px] mt-[9px]"><Spin value="1" cls="w-[46px]" /></Row>
        <Row label="Położenie pionowe:" cls="h-[11px] mt-[7px]"><DlgCombo label="Dół" cls="w-[57px]" /></Row>
        <Zeros cls="mx-[4px] mt-[13px] h-[38px]" />
      </Group>
      <div className="w-[139px] flex flex-col">
        <DimPreview />
        <Group title="Tolerancja jednostek dodatkowych" cls="mt-[8px] h-[78px] pt-[11px]">
          <Row label="Dokładność:" cls="h-[11px]">
            <div className="h-[11px] w-[63px] flex items-center border border-[#c5c2b0] bg-[#ece9d8] text-[5.800px] text-[#a5a28f] pl-[2px] mr-[1px]">
              <span className="flex-1">0.000</span>
              <Chevron on={false} />
            </div>
          </Row>
          <Zeros off cls="mx-[4px] mt-[13px] h-[38px]" />
        </Group>
      </div>
    </div>
    <div className="flex-1 flex items-center">
      <DlgBtn label="OK" cls="ml-[135px] w-[40px] border-[#5b7dc4]" />
      <DlgBtn label="Anuluj" cls="ml-[11px] w-[40px]" />
      <DlgBtn label="Pomoc" cls="ml-[13px] w-[38px]" />
    </div>
  </div>
)

const StyleDropdown = () => (
  <div className="absolute left-[440px] -top-[2px] z-10 w-[53px] h-[17px] flex bg-white border border-[#555] text-[5.800px] text-[#222]">
    <div className="flex-1 flex flex-col pt-[1px] pl-[1px]">
      <span className="h-[7px] leading-[7px] pl-[1px]">ISO-25</span>
      <span className="h-[7px] leading-[7px] pl-[1px] bg-[#2f62c5] text-[#dfe8fa]">NOWY</span>
    </div>
    <div className="w-[9px] bg-[#f4f4ee]" />
  </div>
)

export default function App() {
  return (
    <div className="w-[893px] h-[1263px] pl-[108px] pt-[148px] bg-white blur-[0.5px]">
      <AcadWindow on={false} coords="2048.6744, 931.0371, 0.0000">
        <Dialog />
      </AcadWindow>
      <div className="mt-[116px]">
        <AcadWindow on coords="1661.7041, 968.1697, 0.0000">
          <StyleDropdown />
        </AcadWindow>
      </div>
      <div className="mt-[100px] w-[680px] h-[1px] bg-[#222]" />
    </div>
  )
}
